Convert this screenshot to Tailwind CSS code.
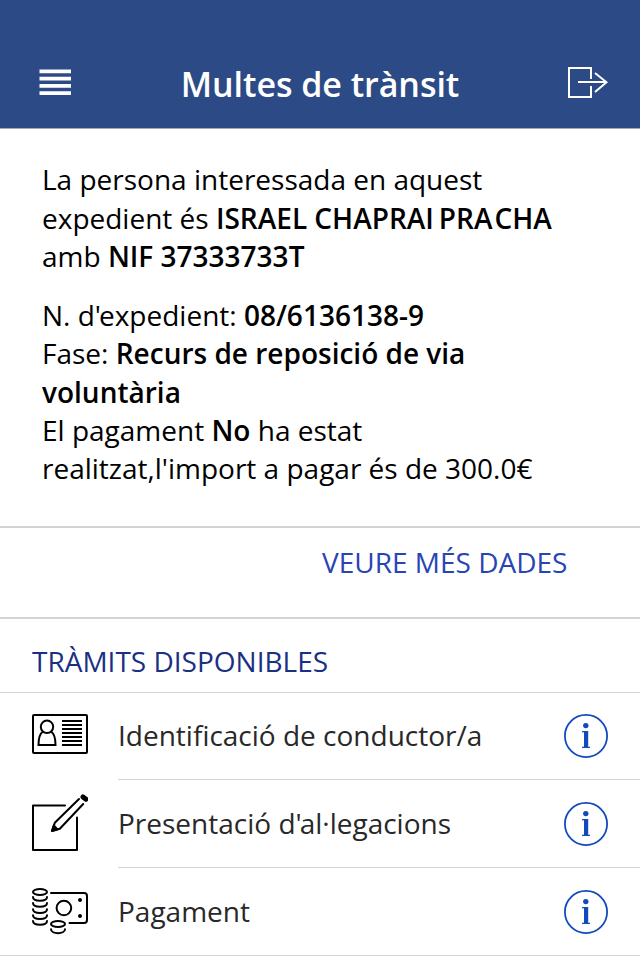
<!DOCTYPE html>
<html lang="ca">
<head>
    <meta charset="UTF-8">
    <meta name="viewport" content="width=device-width, initial-scale=1.0">
    <title>Multes de trànsit</title>
    <script src="https://cdn.jsdelivr.net/npm/@tailwindcss/browser@4"></script>
</head>
<body class="bg-white font-['Open_Sans','Noto_Sans',sans-serif] text-[28px] leading-[38.3px] text-black">
    <div class="w-[640px] h-[960px] overflow-hidden">
        <header class="h-[129px] pt-[37px] px-8 flex items-center justify-between bg-[#2c4b86] border-b border-[#a5a9b0] text-white">
            <button class="w-12 pl-[7px]">
                <svg class="w-8 h-7" viewBox="0 0 32 28" fill="currentColor">
                    <path d="M.5.500h31.500v3.700H.5zM.5 7.800h31.500v3.700H.5zM.5 15.100h31.500v3.700H.5zM.5 22.300h31.500v3.700H.5z"/>
                </svg>
            </button>
            <h1 class="pt-[3px] text-[34px] leading-[46px] font-semibold tracking-[-0.05px] whitespace-nowrap">Multes de trànsit</h1>
            <button class="w-12">
                <svg class="w-12 h-8" viewBox="0 0 48 32" fill="none" stroke="currentColor" stroke-width="2">
                    <path d="M31 12V1H9v29h22V19M18 15h28M35 6l11.500 9.300L35 25"/>
                </svg>
            </button>
        </header>

        <section class="h-[399px] pt-[31px] pl-[42px] border-b-2 border-[#d3d3d3] whitespace-nowrap">
            <p class="leading-[38.5px]">La persona interessada en aquest<br>expedient és <b class="font-semibold">ISRAEL CHAPRAI<span class="inline-block w-[5px]"> </span>PR<span class="tracking-[2px]">A</span>CHA</b><br>amb <b class="font-semibold">NIF 37333733T</b></p>
            <p class="mt-[20.5px]">N. d<span class="tracking-[-2px]">'</span>expedient: <b class="font-semibold">08/6136138-9</b><br>Fase: <b class="font-semibold">Recurs de reposició de via<br>voluntària</b><br>El pagament <b class="font-semibold">No</b> ha estat<br>realitzat,l'import a pagar és de 300.0€</p>
        </section>

        <div class="h-[91px] pt-[15px] pl-[322px] border-b-2 border-[#d3d3d3]">
            <a href="#" class="text-[#2845b4]">VEURE MÉS DADES</a>
        </div>

        <h2 class="h-[74px] pt-[23px] pl-8 border-b border-[#d3d3d3] text-[#1b2f84]">TRÀMITS DISPONIBLES</h2>

        <ul class="text-[#282828] border-b border-[#d3d3d3]">
            <li class="h-[87px] flex items-stretch pl-8">
                <svg class="w-14 shrink-0 h-[87px]" viewBox="32 693 56 87" fill="none" stroke="#000" stroke-width="2">
                    <rect x="33" y="715" width="54" height="38" rx="1"/>
                    <circle cx="47" cy="726.800" r="6.200"/>
                    <path d="M43 731.500c-3 2-4.500 6-4.500 13.500h17c0-7.500-1.500-11.500-4.500-13.500"/>
                    <path d="M62 721h20M62 725h20M62 729h20M62 733h20M62 737h20M62 741h20M62 745h20"/>
                </svg>
                <div class="ml-[30px] flex-1 flex items-center justify-between pr-8 border-b border-[#d3d3d3]">
                    <span class="pb-0.5">Identificació de conductor/a</span>
                    <svg class="w-11 h-11" viewBox="0 0 44 44" fill="#124abc">
                        <circle cx="22" cy="22" r="21.100" fill="none" stroke="#124abc" stroke-width="1.800"/>
                        <circle cx="21.800" cy="11.600" r="2.700"/>
                        <path d="M18 17h6.200v15.800H26V34h-8v-1.200h2V18.200h-2z"/>
                    </svg>
                </div>
            </li>
            <li class="h-[88px] flex items-stretch pl-8">
                <svg class="w-14 shrink-0 h-[88px]" viewBox="32 780 56 88" fill="none" stroke="#000" stroke-width="2" stroke-linecap="round" stroke-linejoin="round">
                    <path d="M65 805.600H33V850h44v-32.500"/>
                    <path d="M79 799 54.800 822.800l-2.800 8 7.800-2L83.200 804"/>
                    <path d="M53.800 825.500 52 831l5.500-1.500z" fill="#000"/>
                    <path d="m83 797 3 2.300" stroke-width="5"/>
                </svg>
                <div class="ml-[30px] flex-1 flex items-center justify-between pr-8 border-b border-[#d3d3d3]">
                    <span lang="en" class="[font-variant-ligatures:none]">Presentació d<span class="tracking-[-2px]">'</span>al·legacions</span>
                    <svg class="w-11 h-11" viewBox="0 0 44 44" fill="#124abc">
                        <circle cx="22" cy="22" r="21.100" fill="none" stroke="#124abc" stroke-width="1.800"/>
                        <circle cx="21.800" cy="11.600" r="2.700"/>
                        <path d="M18 17h6.200v15.800H26V34h-8v-1.200h2V18.200h-2z"/>
                    </svg>
                </div>
            </li>
            <li class="h-[87px] flex items-stretch pl-8">
                <svg class="w-14 shrink-0 h-[87px]" viewBox="32 868 56 87" fill="none" stroke="#000" stroke-width="2" stroke-linecap="round">
                    <ellipse cx="40" cy="892" rx="7" ry="3"/>
                    <path d="M33 897c0 5 14 5 14 0M33 903c0 5 14 5 14 0M33 909.200c0 5 14 5 14 0M33 915.200c0 5 14 5 14 0M33 921c0 5 14 5 14 0"/>
                    <path d="M51 893h33q3 0 3 3v24q0 3-3 3H69.500"/>
                    <circle cx="63.900" cy="908" r="7.300"/>
                    <ellipse cx="58" cy="924" rx="7" ry="3"/>
                    <path d="M51 929.300c0 5.200 14 5.200 14 0"/>
                    <path d="M80 900h.01M80 916h.01" stroke-width="4"/>
                </svg>
                <div class="ml-[30px] flex-1 flex items-center justify-between pr-8">
                    <span>Pagament</span>
                    <svg class="w-11 h-11" viewBox="0 0 44 44" fill="#124abc">
                        <circle cx="22" cy="22" r="21.100" fill="none" stroke="#124abc" stroke-width="1.800"/>
                        <circle cx="21.800" cy="11.600" r="2.700"/>
                        <path d="M18 17h6.200v15.800H26V34h-8v-1.200h2V18.200h-2z"/>
                    </svg>
                </div>
            </li>
        </ul>
    </div>
</body>
</html>
